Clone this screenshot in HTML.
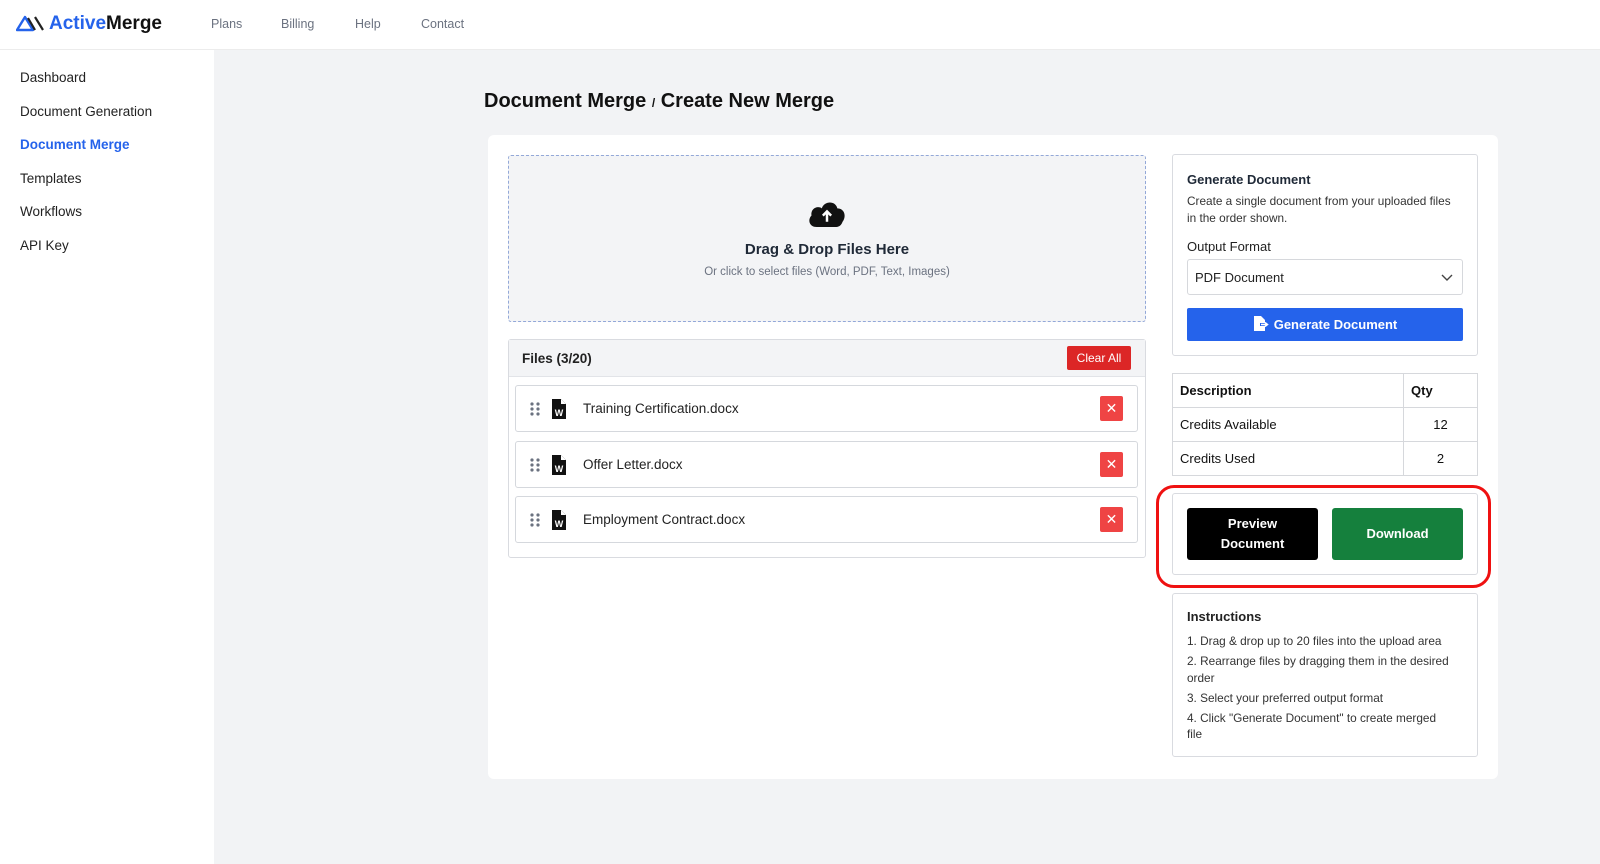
<!DOCTYPE html>
<html><head><meta charset="utf-8"><style>
*{box-sizing:border-box;margin:0;padding:0}
body{width:1600px;height:864px;background:#f2f3f5;font-family:"Liberation Sans",sans-serif;color:#111;position:relative;overflow:hidden}
.abs{position:absolute}
.hdr{left:0;top:0;width:1600px;height:50px;background:#fff;border-bottom:1px solid #ececec}
.nav{top:17px;font-size:12.5px;color:#6b7280}
.side{left:0;top:50px;width:214px;height:814px;background:#fff}
.si{left:20px;font-size:13.5px;color:#222}
.card{left:488px;top:135px;width:1010px;height:644px;background:#fff;border-radius:6px}
.box{background:#fff;border:1px solid #d9dbe0;border-radius:3px}
.row{left:515px;width:623px;height:47px;border:1px solid #d5d8dd;border-radius:3px;background:#fff}
.row .t{position:absolute;left:67px;top:15px;font-size:13.5px;color:#222}
.row .x{position:absolute;right:14px;top:10px;width:23px;height:25px;background:#ef4444;border-radius:2px;color:#fff;font-size:14px;text-align:center;line-height:25px}
.dots{position:absolute;left:14px;top:16px;width:10px;height:14px}
.doc{position:absolute;left:35px;top:12px}
td{border:1px solid #d6d8dc;font-size:13px;padding:0 7px;height:34px}
</style></head><body>
<div class="abs hdr"></div>
<svg class="abs" style="left:16px;top:14px" width="28" height="18" viewBox="0 0 28 18"><path d="M1 16 L9 3 L17 16 Z" fill="none" stroke="#2563eb" stroke-width="2.4" stroke-linejoin="round"/><path d="M12 4 L19 16 M19 3 L27 16" stroke="#222" stroke-width="2.2" fill="none"/></svg>
<div class="abs" style="left:49px;top:13px;font-size:19px;font-weight:bold"><span style="color:#2563eb">Active</span>Merge</div>
<div class="abs nav" style="left:211px">Plans</div>
<div class="abs nav" style="left:281px">Billing</div>
<div class="abs nav" style="left:355px">Help</div>
<div class="abs nav" style="left:421px">Contact</div>
<div class="abs side"></div>
<div class="abs si" style="top:70px">Dashboard</div>
<div class="abs si" style="top:104px">Document Generation</div>
<div class="abs si" style="top:137px;color:#2563eb;font-weight:bold">Document Merge</div>
<div class="abs si" style="top:171px">Templates</div>
<div class="abs si" style="top:204px">Workflows</div>
<div class="abs si" style="top:238px">API Key</div>
<div class="abs" style="left:484px;top:90px;font-size:20px;font-weight:bold">Document Merge <span style="font-size:12px">/</span> Create New Merge</div>
<div class="abs card"></div>
<div class="abs" style="left:508px;top:155px;width:638px;height:167px;background:#f3f4f6;border:1px dashed #93a8d8;border-radius:3px"></div>
<svg class="abs" style="left:807px;top:199px" width="40" height="29" viewBox="0 0 38 28"><path d="M9 27 C2 27 0 20 4 16 C3 9 10 6 14 9 C16 2 27 1 29 9 C36 9 38 17 34 22 C33 25 31 27 28 27 Z" fill="#111"/><path d="M19 22 V12 M15 16 L19 12 L23 16" stroke="#fff" stroke-width="2.4" fill="none"/></svg>
<div class="abs" style="left:508px;width:638px;top:241px;text-align:center;font-size:15px;font-weight:bold;color:#1f2937">Drag &amp; Drop Files Here</div>
<div class="abs" style="left:508px;width:638px;top:266px;text-align:center;font-size:11.5px;color:#6b7280">Or click to select files (Word, PDF, Text, Images)</div>
<div class="abs box" style="left:508px;top:339px;width:638px;height:219px"></div>
<div class="abs" style="left:509px;top:340px;width:636px;height:37px;background:#f3f4f6;border-bottom:1px solid #e2e4e8"></div>
<div class="abs" style="left:522px;top:351px;font-size:13.5px;font-weight:bold;color:#222">Files (3/20)</div>
<div class="abs" style="left:1067px;top:346px;width:64px;height:24px;background:#dc2626;border-radius:2px;color:#fff;font-size:12px;text-align:center;line-height:24px">Clear All</div>
<div class="abs row" style="top:385px"><svg class="dots" viewBox="0 0 10 14"><g fill="#6b7280"><circle cx="2" cy="2" r="1.6"/><circle cx="8" cy="2" r="1.6"/><circle cx="2" cy="7" r="1.6"/><circle cx="8" cy="7" r="1.6"/><circle cx="2" cy="12" r="1.6"/><circle cx="8" cy="12" r="1.6"/></g></svg><svg class="doc" width="16" height="22" viewBox="0 0 16 22"><path d="M1 1h9l5 5v15H1z" fill="#111"/><path d="M10 1v5h5" fill="#fff"/><text x="8" y="18" font-size="9" font-weight="bold" fill="#fff" text-anchor="middle" font-family="Liberation Sans">W</text></svg><div class="t">Training Certification.docx</div><div class="x">✕</div></div>
<div class="abs row" style="top:441px"><svg class="dots" viewBox="0 0 10 14"><g fill="#6b7280"><circle cx="2" cy="2" r="1.6"/><circle cx="8" cy="2" r="1.6"/><circle cx="2" cy="7" r="1.6"/><circle cx="8" cy="7" r="1.6"/><circle cx="2" cy="12" r="1.6"/><circle cx="8" cy="12" r="1.6"/></g></svg><svg class="doc" width="16" height="22" viewBox="0 0 16 22"><path d="M1 1h9l5 5v15H1z" fill="#111"/><path d="M10 1v5h5" fill="#fff"/><text x="8" y="18" font-size="9" font-weight="bold" fill="#fff" text-anchor="middle" font-family="Liberation Sans">W</text></svg><div class="t">Offer Letter.docx</div><div class="x">✕</div></div>
<div class="abs row" style="top:496px"><svg class="dots" viewBox="0 0 10 14"><g fill="#6b7280"><circle cx="2" cy="2" r="1.6"/><circle cx="8" cy="2" r="1.6"/><circle cx="2" cy="7" r="1.6"/><circle cx="8" cy="7" r="1.6"/><circle cx="2" cy="12" r="1.6"/><circle cx="8" cy="12" r="1.6"/></g></svg><svg class="doc" width="16" height="22" viewBox="0 0 16 22"><path d="M1 1h9l5 5v15H1z" fill="#111"/><path d="M10 1v5h5" fill="#fff"/><text x="8" y="18" font-size="9" font-weight="bold" fill="#fff" text-anchor="middle" font-family="Liberation Sans">W</text></svg><div class="t">Employment Contract.docx</div><div class="x">✕</div></div>

<div class="abs box" style="left:1172px;top:154px;width:306px;height:202px"></div>
<div class="abs" style="left:1187px;top:172px;font-size:13px;font-weight:bold;color:#1f2937">Generate Document</div>
<div class="abs" style="left:1187px;top:193px;width:268px;font-size:11.8px;line-height:17px;color:#333">Create a single document from your uploaded files in the order shown.</div>
<div class="abs" style="left:1187px;top:239px;font-size:13px;color:#222">Output Format</div>
<div class="abs" style="left:1187px;top:259px;width:276px;height:36px;border:1px solid #d6d8dc;border-radius:3px;font-size:13px;padding:10px 7px;color:#222">PDF Document</div>
<svg class="abs" style="left:1441px;top:274px" width="12" height="7" viewBox="0 0 12 7"><path d="M1 1l5 5 5-5" stroke="#444" stroke-width="1.4" fill="none"/></svg>
<div class="abs" style="left:1187px;top:308px;width:276px;height:33px;background:#2563eb;border-radius:2px;color:#fff;font-size:13px;font-weight:bold;text-align:center;line-height:33px"><svg width="16" height="15" viewBox="0 0 16 15" style="vertical-align:-2px;margin-right:5px"><path d="M1 0h7l4 4v3H7v3h5v5H1z" fill="#fff"/><path d="M8 8.5h6M12 6.5l2.5 2-2.5 2" stroke="#fff" stroke-width="1.5" fill="none"/></svg>Generate Document</div>
<table class="abs" style="left:1172px;top:373px;width:306px;border-collapse:collapse;background:#fff">
<tr><td style="font-weight:bold;width:231px">Description</td><td style="font-weight:bold">Qty</td></tr>
<tr><td>Credits Available</td><td style="text-align:center">12</td></tr>
<tr><td>Credits Used</td><td style="text-align:center">2</td></tr></table>
<div class="abs box" style="left:1172px;top:493px;width:306px;height:82px"></div>
<div class="abs" style="left:1187px;top:508px;width:131px;height:52px;background:#000;border-radius:3px;color:#fff;font-size:13px;font-weight:bold;text-align:center;line-height:20px;padding-top:6px">Preview<br>Document</div>
<div class="abs" style="left:1332px;top:508px;width:131px;height:52px;background:#15803d;border-radius:3px;color:#fff;font-size:13px;font-weight:bold;text-align:center;line-height:52px">Download</div>
<div class="abs" style="left:1156px;top:485px;width:335px;height:103px;border:3px solid #ef1111;border-radius:18px"></div>
<div class="abs box" style="left:1172px;top:593px;width:306px;height:164px"></div>
<div class="abs" style="left:1187px;top:609px;font-size:13px;font-weight:bold;color:#222">Instructions</div>
<div class="abs" style="left:1187px;top:633px;width:262px;font-size:11.8px;line-height:16.3px;color:#333">
<div style="margin-bottom:4px">1. Drag &amp; drop up to 20 files into the upload area</div>
<div style="margin-bottom:4px">2. Rearrange files by dragging them in the desired order</div>
<div style="margin-bottom:4px">3. Select your preferred output format</div>
<div>4. Click "Generate Document" to create merged file</div></div>
</body></html>
